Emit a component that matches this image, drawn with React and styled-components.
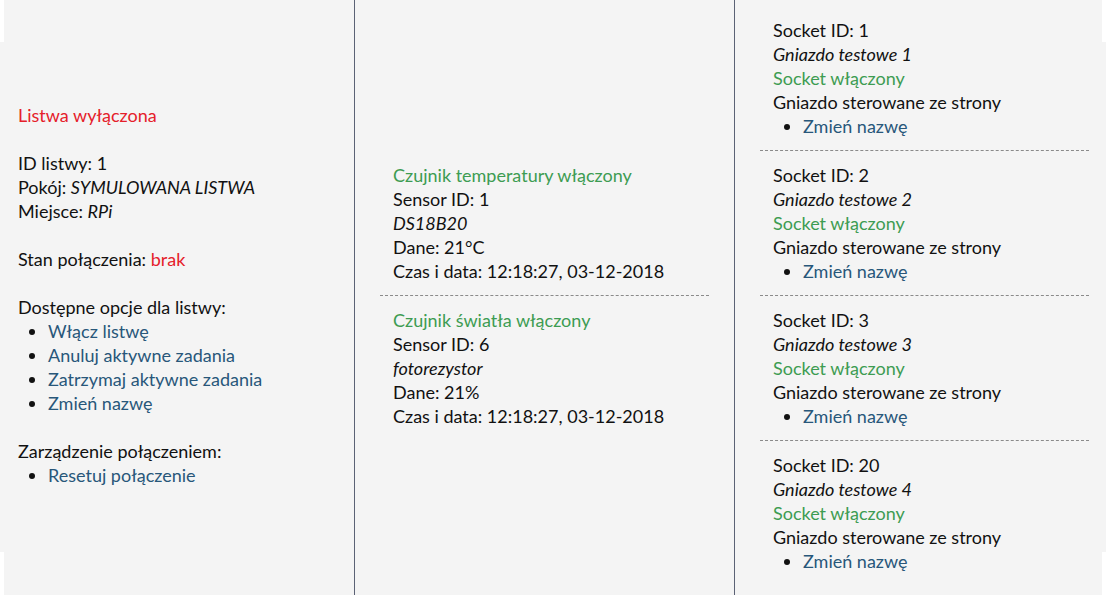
import React from "react";
import styled, { createGlobalStyle } from "styled-components";

const GlobalStyle = createGlobalStyle`
  html, body {
    margin: 0;
    padding: 0;
    background: #ffffff;
  }
  body {
    font-family: Lato, "Open Sans", "Liberation Sans", sans-serif;
    font-size: 18px;
    line-height: 24px;
    color: #111111;
  }
`;

const strip = {
  id: 1,
  room: "SYMULOWANA LISTWA",
  place: "RPi",
};

const sensors = [
  { title: "Czujnik temperatury włączony", id: 1, model: "DS18B20", data: "21°C", time: "12:18:27, 03-12-2018" },
  { title: "Czujnik światła włączony", id: 6, model: "fotorezystor", data: "21%", time: "12:18:27, 03-12-2018" },
];

const sockets = [
  { id: 1, name: "Gniazdo testowe 1" },
  { id: 2, name: "Gniazdo testowe 2" },
  { id: 3, name: "Gniazdo testowe 3" },
  { id: 20, name: "Gniazdo testowe 4" },
];

const App = () => {
  return (
    <>
      <GlobalStyle />
      <Frame>
        <Column width={351} divided>
          <LeftContent>
            <Block>
              <Status off>Listwa wyłączona</Status>
            </Block>
            <Block>
              <div>ID listwy: {strip.id}</div>
              <div>
                Pokój: <em>{strip.room}</em>
              </div>
              <div>
                Miejsce: <em>{strip.place}</em>
              </div>
            </Block>
            <Block>
              Stan połączenia: <Status off>brak</Status>
            </Block>
            <Block>
              <div>Dostępne opcje dla listwy:</div>
              <Options>
                <li><Action href="#">Włącz listwę</Action></li>
                <li><Action href="#">Anuluj aktywne zadania</Action></li>
                <li><Action href="#">Zatrzymaj aktywne zadania</Action></li>
                <li><Action href="#">Zmień nazwę</Action></li>
              </Options>
            </Block>
            <Block>
              <div>Zarządzenie połączeniem:</div>
              <Options>
                <li><Action href="#">Resetuj połączenie</Action></li>
              </Options>
            </Block>
          </LeftContent>
        </Column>

        <Column width={380} divided>
          <ItemList left={25} right={25}>
            {sensors.map((s) => (
              <Item key={s.id}>
                <Status>{s.title}</Status>
                <div>Sensor ID: {s.id}</div>
                <div><em>{s.model}</em></div>
                <div>Dane: {s.data}</div>
                <div>Czas i data: {s.time}</div>
              </Item>
            ))}
          </ItemList>
        </Column>

        <Column width={367}>
          <ItemList left={25} right={13}>
            {sockets.map((s) => (
              <Item key={s.id}>
                <div>Socket ID: {s.id}</div>
                <div><em>{s.name}</em></div>
                <Status>Socket włączony</Status>
                <div>Gniazdo sterowane ze strony</div>
                <Options>
                  <li><Action href="#">Zmień nazwę</Action></li>
                </Options>
              </Item>
            ))}
          </ItemList>
        </Column>
      </Frame>
    </>
  );
};

// the grey backdrop stops 42px short of the top and bottom edges,
// leaving thin white strips at the outer sides
const Frame = styled.div`
  display: flex;
  height: 595px;
  padding: 0 4px;
  background: linear-gradient(
    to bottom,
    #ffffff 0 42px,
    #f4f4f4 42px 552px,
    #ffffff 552px
  );
`;

const Column = styled.div`
  width: ${(p) => p.width}px;
  flex-shrink: 0;
  box-sizing: border-box;
  display: flex;
  flex-direction: column;
  justify-content: center;
  padding-bottom: 5px;
  background: #f4f4f4;
  border-right: ${(p) => (p.divided ? "1px solid #5b6275" : "none")};
`;

const LeftContent = styled.div`
  padding-left: 14px;
`;

const Block = styled.div`
  & + & {
    margin-top: 24px;
  }
`;

const Status = styled.span`
  display: ${(p) => (p.off ? "inline" : "block")};
  color: ${(p) => (p.off ? "#e5202a" : "#3d9c52")};
`;

const Options = styled.ul`
  margin: 0;
  padding-left: 30px;
  list-style: disc;

  li::marker {
    color: #111111;
  }
`;

const Action = styled.a`
  color: #28577a;
  text-decoration: none;
`;

const ItemList = styled.div`
  margin: 0 ${(p) => p.right}px 0 ${(p) => p.left}px;
`;

const Item = styled.div`
  padding-left: 13px;

  & + & {
    margin-top: 12px;
    padding-top: 12px;
    border-top: 1px dashed #8a8a8a;
  }

  em {
    font-style: italic;
  }
`;

export default App;
